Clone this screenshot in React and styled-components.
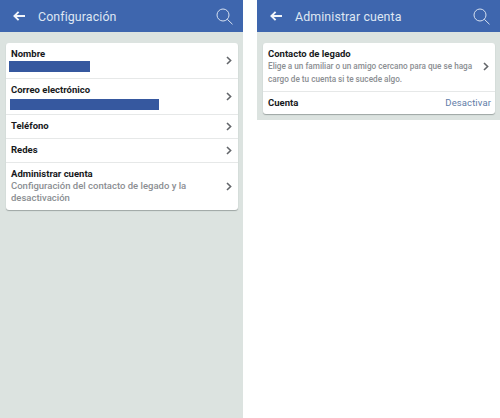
import * as React from 'react';
import styled, { createGlobalStyle } from 'styled-components';

const GlobalStyle = createGlobalStyle`
  html, body {
    margin: 0;
    padding: 0;
    background: #ffffff;
  }
  body {
    font-family: Roboto, "Liberation Sans", sans-serif;
  }
`

const Page = styled.div`
  display: flex;
  justify-content: space-between;
  align-items: flex-start;
  width: 500px;
  height: 418px;
  overflow: hidden;
`

const Screen = styled.div`
  width: 243px;
  height: ${(p) => p.$height}px;
  background-color: #dce3e0;
`

const Header = styled.div`
  display: flex;
  align-items: center;
  height: 32px;
  padding: 0 10px 0 13px;
  background-color: #3e66ae;
  color: #dfe7f3;
`

const Title = styled.div`
  flex: 1;
  margin-left: 13px;
  font-size: 12.4px;
  letter-spacing: 0.1px;
`

const Card = styled.div`
  margin: 11px 5px 0 6px;
  background-color: #ffffff;
  border-radius: 3px;
  box-shadow: 0 1px 1px rgba(80, 90, 90, 0.45);
`

const Row = styled.div`
  display: flex;
  align-items: center;
  justify-content: space-between;
  height: ${(p) => p.$height}px;
  padding: 0 6px 1px 5px;
  border-top: ${(p) => (p.$first ? 'none' : '1px solid #e6e8e8')};
  box-sizing: border-box;
`

const RowText = styled.div`
  display: flex;
  flex-direction: column;
  flex: 1;
  min-width: 0;
`

const Label = styled.div`
  color: #17191c;
  font-size: 9.5px;
  font-weight: 700;
  line-height: 12px;
`

const Description = styled.div`
  color: #8b8e92;
  font-size: ${(p) => p.$size}px;
  font-weight: 500;
  line-height: 12.5px;
`

const Redacted = styled.div`
  width: ${(p) => p.$width}px;
  height: 11px;
  margin: ${(p) => p.$top}px 0 -${(p) => p.$top - 1}px ${(p) => p.$left}px;
  background-color: #36589f;
`

const Action = styled.div`
  margin-right: -2px;
  color: #5f7da8;
  font-size: 9.5px;
  letter-spacing: 0.1px;
`

const BackIcon = () => (
  <svg width="12" height="10" viewBox="0 0 12 10" fill="none" stroke="#f2f5fa" strokeWidth="1.9">
    <path d="M12 5H1.6M5.6 .8 1.4 5l4.2 4.2" />
  </svg>
)

const SearchIcon = () => (
  <svg width="17" height="17" viewBox="0 0 17 17" fill="none" stroke="#d6e0f0" strokeWidth="1">
    <circle cx="7" cy="7" r="6" />
    <path d="M11.3 11.3 16.5 16.3" />
  </svg>
)

const Chevron = () => (
  <svg width="6" height="9" viewBox="0 0 6 9" fill="none" stroke="#63666a" strokeWidth="1.6">
    <path d="M1 1 4.6 4.5 1 8" />
  </svg>
)

const Bar = ({ title }) => (
  <Header>
    <BackIcon />
    <Title>{title}</Title>
    <SearchIcon />
  </Header>
)

const App = () => {
  return (
    <Page>
      <GlobalStyle />

      <Screen $height={418}>
        <Bar title="Configuración" />
        <Card>
          <Row $first $height={35}>
            <RowText>
              <Label>Nombre</Label>
              <Redacted $width={81} $top={1} $left={-2} />
            </RowText>
            <Chevron />
          </Row>
          <Row $height={36}>
            <RowText>
              <Label>Correo electrónico</Label>
              <Redacted $width={149} $top={3} $left={-1} />
            </RowText>
            <Chevron />
          </Row>
          <Row $height={24}>
            <Label>Teléfono</Label>
            <Chevron />
          </Row>
          <Row $height={24}>
            <Label>Redes</Label>
            <Chevron />
          </Row>
          <Row $height={48}>
            <RowText>
              <Label>Administrar cuenta</Label>
              <Description $size={9.5}>
                Configuración del contacto de legado y la<br />desactivación
              </Description>
            </RowText>
            <Chevron />
          </Row>
        </Card>
      </Screen>

      <Screen $height={120}>
        <Bar title="Administrar cuenta" />
        <Card>
          <Row $first $height={48}>
            <RowText>
              <Label>Contacto de legado</Label>
              <Description $size={8.2}>
                Elige a un familiar o un amigo cercano para que se haga<br />cargo de tu cuenta si te sucede algo.
              </Description>
            </RowText>
            <Chevron />
          </Row>
          <Row $height={23}>
            <Label>Cuenta</Label>
            <Action>Desactivar</Action>
          </Row>
        </Card>
      </Screen>
    </Page>
  )
}

export default App;
